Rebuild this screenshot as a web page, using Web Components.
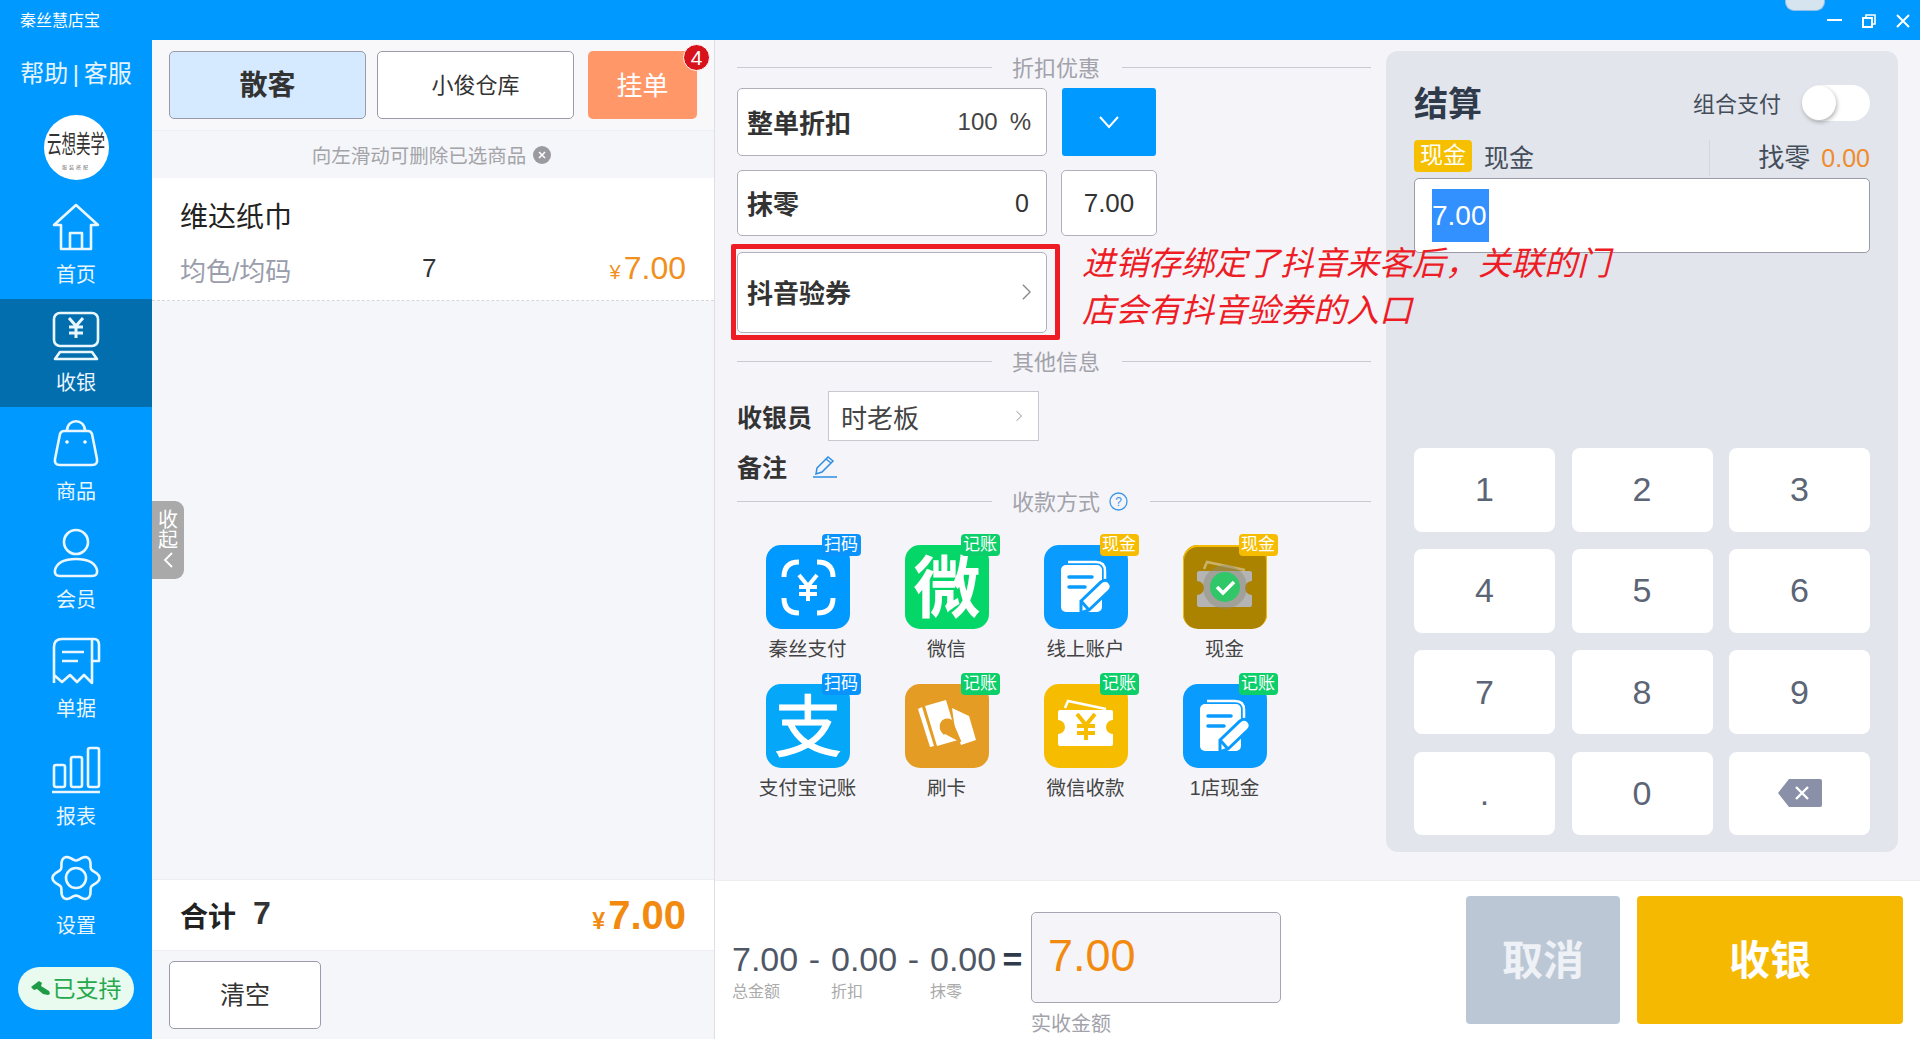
<!doctype html>
<html lang="zh"><head><meta charset="utf-8"><title>秦丝慧店宝</title>
<style>
html,body{margin:0;height:1039px;overflow:hidden;background:#f4f4f9}
body{font-family:"Liberation Sans","Noto Sans CJK SC",sans-serif;color:#333}
</style></head><body>
<app-shell></app-shell>
<script>
const gear=(()=>{let d='';for(let i=0;i<=96;i++){const t=i/96*Math.PI*2,r=20.5+3*Math.cos(6*t);d+=(i?'L':'M')+(24+r*Math.cos(t)).toFixed(2)+' '+(24+r*Math.sin(t)).toFixed(2)}return d+'Z'})();
const nav={
home:'<path d="M24 2 46 22H39V46H9V22H2Z"/><path d="M18 46V30H30V46"/>',
cash:'<rect x="2" y="1" width="44" height="33" rx="6"/><path d="M17 6l7 8 7-8M24 14v12M17 15h14M17 21h14" stroke-width="3"/><path d="M8 40H40L45 47H3Z"/>',
bag:'<path d="M12 11H36Q39 11 40 14L45 39Q46 45 40 45H8Q2 45 3 39L8 14Q9 11 12 11Z"/><path d="M15 11C15-2 33-2 33 11"/><circle cx="15" cy="22" r="1.8" fill="#fff" stroke="none"/><circle cx="33" cy="22" r="1.8" fill="#fff" stroke="none"/>',
user:'<circle cx="24" cy="13" r="12"/><path d="M8 47H40Q46 47 45 41C43 33 34 30 24 30S5 33 3 41Q2 47 8 47Z"/>',
bill:'<path d="M2 46V10Q2 2 10 2H42Q47 2 47 8V24H40M40 2V46L32 38 25 45 18 38 10 45 2 38V46"/><path d="M10 15H32M10 24H26"/>',
chart:'<rect x="2" y="19" width="11" height="22" rx="2"/><rect x="19" y="11" width="11" height="30" rx="2"/><rect x="36" y="2" width="11" height="39" rx="2"/><path d="M0 46H48"/>',
gear:`<path d="${gear}"/><circle cx="24" cy="24" r="10"/>`
};
const yen=c=>`<path d="M33 30 42 41 51 30M42 41V56M33 42H51M33 49H51" fill="none" stroke="${c}" stroke-width="4"/>`;
const ticket=(c,back)=>`<path d="M21 24 24 17 62 25" fill="none" stroke="${back}" stroke-width="2.5"/><path d="M16 26H67Q69 26 69 28V36A7 7 0 0 0 69 50V60Q69 62 67 62H16Q14 62 14 60V50A7 7 0 0 0 14 36V28Q14 26 16 26Z" fill="${c}"/>`;
const note=b=>`<path d="M24 17H52Q61 17 61 26V46" fill="none" stroke="#fff" stroke-width="2.5"/><rect x="17" y="20" width="41" height="47" rx="5" fill="#fff"/><path d="M25 32H48M25 42H41" stroke="${b}" stroke-width="3.5" stroke-linecap="round" fill="none"/><path d="M37 56 57 37Q62 33 66 38 69 42 65 46L45 65 37 68Z" fill="#fff" stroke="${b}" stroke-width="3"/><path d="M37 56 45 65" stroke="${b}" stroke-width="3"/>`;
const glyph=(t,w,s)=>`<text x="42" y="67" text-anchor="middle" font-size="67" font-weight="${w}" fill="#fff" stroke="#fff" stroke-width="${s}" font-family="Noto Sans CJK SC">${t}</text>`;
const payIcons={
scan:'<path d="M33 17Q18 17 18 32M51 17Q67 17 67 32M33 68Q18 68 18 53M51 68Q67 68 67 53" fill="none" stroke="#fff" stroke-width="5"/>'+yen('#fff'),
wei:glyph('微',700,0),zhi:glyph('支',400,1.2),note:note('#0a9bff'),note2:note('#0a9bff'),
cashsel:ticket('#b4b4b4','#c9b36a')+'<circle cx="42" cy="42" r="22" fill="#8a8a7a" opacity=".45"/><circle cx="42" cy="42" r="15" fill="#2fc767"/><path d="M34 42 40 48 51 37" fill="none" stroke="#fff" stroke-width="3.5"/>',
card:'<polygon points="13,25 17,23 29,62 25,63" fill="#fff"/><polygon points="20,22 41,16 53,56 32,62" fill="#fff"/><polygon points="47,24 64,32 71,56 56,61 50,45" fill="#fff"/><path d="M40 50C32 42 38 33 46 37L55 58" fill="#e49c25" stroke="#e49c25" stroke-width="3"/>',
ticket:ticket('#fff','#fff')+yen('#f5bc00')
};
const def=(name,css,html)=>customElements.define(name,class extends HTMLElement{connectedCallback(){if(this.shadowRoot)return;this.attachShadow({mode:'open'}).innerHTML=`<style>${css}</style>${html(this)}`}});
const chev=(s,c='#888')=>`<svg width="${s}" height="${s*2}" viewBox="0 0 10 20" fill="none" stroke="${c}" stroke-width="1.5"><path d="M1 2 9 10 1 18"/></svg>`;

def('app-shell',`:host{display:flex;flex-direction:column;width:1920px;height:1039px}
.b{flex:1;display:flex;min-height:0}.m{flex:1;display:flex;flex-direction:column;min-width:0}.t{flex:1;display:flex;min-height:0}`,
()=>`<title-bar></title-bar><div class="b"><side-nav></side-nav><cart-panel></cart-panel><div class="m"><div class="t"><option-panel></option-panel><settle-card></settle-card></div><amount-bar></amount-bar></div></div>`);

def('title-bar',`:host{display:flex;height:40px;background:#0099ff;color:#fff;font-size:16px;position:relative}
.n{padding:13px 0 0 20px;line-height:16px;flex:1}.nub{width:38px;height:10px;background:#d6e4ef;border:1px solid #8cc0ea;border-top:0;border-radius:0 0 9px 9px;margin-right:2px}
.c{display:flex;gap:20px;padding:14px 10px 0 0}svg{display:block}`,
()=>`<div class="n">秦丝慧店宝</div><div class="nub"></div><div class="c">
<svg width="15" height="14" viewBox="0 0 15 14" stroke="#fff" fill="none" stroke-width="2"><path d="M0 6H15"/></svg>
<svg width="14" height="14" viewBox="0 0 14 14" stroke="#fff" fill="none" stroke-width="1.6"><rect x="1" y="4" width="9" height="9" stroke-width="2"/><path d="M4 4V1H13V10H10"/></svg>
<svg width="14" height="14" viewBox="0 0 14 14" stroke="#fff" fill="none" stroke-width="2"><path d="M1 1 13 13M13 1 1 13"/></svg></div>`);

def('side-nav',`:host{display:flex;flex-direction:column;align-items:stretch;width:152px;background:#0099ff;color:#fff;flex:none}
.h{height:67px;font-size:24px;line-height:67px;text-align:center;color:#e4f4ff;white-space:nowrap;word-spacing:-2px}
.a{width:65px;height:65px;border-radius:50%;background:#fff;align-self:center;margin:8px 0 10px;color:#333;display:flex;flex-direction:column;align-items:center;overflow:hidden}
.a b{font-weight:400;font-size:14.5px;line-height:15px;margin-top:23px;transform:scaleY(1.7);white-space:nowrap}
.a i{font-style:normal;font-size:5px;line-height:6px;margin-top:11px;color:#777;letter-spacing:2px}
.p{margin:17px auto 0;width:116px;height:43px;border-radius:22px;background:#e8fbee;color:#27a84d;font-size:23px;display:flex;align-items:center;justify-content:center;gap:2px;white-space:nowrap}
.p span{margin-top:-3px}`,
()=>`<div class="h">帮助 | 客服</div><div class="a"><b>云想美学</b><i>服装搭配</i></div>
<nav-item icon="home" label="首页"></nav-item><nav-item icon="cash" label="收银" active></nav-item><nav-item icon="bag" label="商品"></nav-item><nav-item icon="user" label="会员"></nav-item><nav-item icon="bill" label="单据"></nav-item><nav-item icon="chart" label="报表"></nav-item><nav-item icon="gear" label="设置"></nav-item>
<div class="p"><svg width="20" height="16" viewBox="0 0 20 16" fill="#1f9a45"><path d="M0 7 8 1 11 3 10 6 18 11Q20 14 17 15L12 14 6 9 3 10Z"/></svg><span>已支持</span></div>`);

def('nav-item',`:host{display:flex;flex-direction:column;align-items:center;height:108.5px;color:#fff;font-size:20px;box-sizing:border-box;padding-top:13px}
:host([active]){background:#026eae}svg{display:block;overflow:visible}span{line-height:24px;margin-top:11.5px;color:#eaf6ff}`,
e=>`<svg width="48" height="48" viewBox="0 0 48 48" fill="none" stroke="#eaf7ff" stroke-width="2.6" stroke-linejoin="round">${nav[e.getAttribute('icon')]}</svg><span>${e.getAttribute('label')}</span>`);

def('cart-panel',`:host{display:flex;flex-direction:column;width:563px;flex:none;background:#f5f6fa;border-right:1px solid #dedee4;box-sizing:border-box;position:relative}
.top{display:flex;padding:11px 0 11px 17px;border-bottom:1px solid #eceef2;background:#f8f8fa;height:68px;flex:none}
.btn{width:197px;height:68px;box-sizing:border-box;border:1px solid #9a9aaa;border-radius:5px;background:#fff;display:flex;align-items:center;justify-content:center;font-size:22px;margin-right:11px;padding-bottom:4px}
.btn.s{background:#d6eaff;font-size:28px;font-weight:700;color:#333}
.hang{width:109px;height:68px;box-sizing:border-box;padding-bottom:4px;background:#ff9769;border-radius:5px;color:#fff;font-size:26px;display:flex;align-items:center;justify-content:center;margin-left:3px;position:relative}
.bd{position:absolute;right:-13px;top:-7px;width:27px;height:27px;box-sizing:border-box;border:1px solid #fff;border-radius:50%;background:#d8121a;color:#fff;font-size:21px;display:flex;align-items:center;justify-content:center}
.hint{height:47px;display:flex;align-items:center;justify-content:center;color:#a4a4a8;font-size:19.5px;gap:7px;padding-right:3px;flex:none}
.x{width:18px;height:18px;border-radius:50%;background:#9a9aa0;display:block}
.it{background:#fff;height:122px;border-bottom:1px dashed #d5d6de;flex:none;position:relative;padding:0 28px;display:flex;flex-direction:column}
.nm{font-size:28px;line-height:40px;margin-top:20px;color:#222}
.r{display:flex;align-items:center;margin-top:13px;height:36px}.sub{font-size:26px;color:#9a9dab;width:242px}.q{font-size:26px;color:#333;flex:1;margin-top:-2px}
.pr{color:#f09020;font-size:32px;display:flex;align-items:baseline;margin-top:-2px}.pr small{font-size:20px;margin-right:3px}
.tab{position:absolute;left:0;top:461px;width:32px;height:78px;background:#a9a9a9;border-radius:0 9px 9px 0;color:#fff;font-size:20px;line-height:20px;text-align:center;padding-top:9px;box-sizing:border-box}
.tab svg{display:block;margin:2px auto 0}
.sp{flex:1}.tot{height:70px;background:#fff;border-top:1px solid #eceef2;border-bottom:1px solid #eceef2;display:flex;align-items:center;padding:0 28px;flex:none;font-weight:700}
.tl{font-size:28px;color:#222}.tn{font-size:32px;margin-left:17px;flex:1;color:#333;margin-top:-4px}.tp{color:#f28a10;font-size:40px;display:flex;align-items:baseline}.tp small{font-size:23px;margin-right:3px}
.bot{height:88px;padding:10px 0 0 17px;box-sizing:border-box;flex:none}.clr{width:152px;height:68px;box-sizing:border-box;border:1px solid #9a9aaa;border-radius:5px;background:#fff;font-size:25px;display:flex;align-items:center;justify-content:center;padding-bottom:4px}`,
()=>`<div class="top"><div class="btn s">散客</div><div class="btn">小俊仓库</div><div class="hang">挂单<span class="bd">4</span></div></div>
<div class="hint">向左滑动可删除已选商品<svg class="x" viewBox="0 0 18 18" stroke="#fff" stroke-width="1.6"><path d="M6 6 12 12M12 6 6 12"/></svg></div>
<div class="it"><div class="nm">维达纸巾</div><div class="r"><span class="sub">均色/均码</span><span class="q">7</span><span class="pr"><small>¥</small>7.00</span></div></div>
<div class="tab">收<br>起<svg width="10" height="16" viewBox="0 0 10 16" fill="none" stroke="#fff" stroke-width="1.8"><path d="M9 1 2 8 9 15"/></svg></div>
<div class="sp"></div><div class="tot"><span class="tl">合计</span><span class="tn">7</span><span class="tp"><small>¥</small>7.00</span></div>
<div class="bot"><div class="clr">清空</div></div>`);

def('sec-title',`:host{display:flex;align-items:center;height:30px;color:#a2a2aa;font-size:22px;white-space:nowrap;width:634px}
i{height:1px;background:#c9c9d2;display:block}.l{width:255px}.r{flex:1}span{margin:-3px 0 0 20px}slot{display:block}.gap{margin-left:22px}`,
()=>`<i class="l"></i><span><slot></slot></span><slot name="after"></slot><i class="r gap"></i>`);

def('field-box',`:host{display:flex;flex:none;align-items:center;box-sizing:border-box;width:310px;background:#fff;border:1px solid #b0b0bc;border-radius:5px;padding:0 15px 0 9px;font-size:26px;color:#333}
.l{font-weight:700;flex:1;color:#333;margin-top:-2px}`,
e=>`<span class="l">${e.getAttribute('label')}</span><slot></slot>`);

def('pay-tile',`:host{display:flex;flex-direction:column;align-items:center;height:139px;width:139px}
.w{width:84px;height:84px;border-radius:15px;position:relative}svg{display:block;overflow:visible}
.b{position:absolute;right:-11px;top:-11px;width:39px;height:22px;border-radius:4px;color:#fff;font-size:17px;line-height:22px;text-align:center;white-space:nowrap}
span{font-size:19.5px;line-height:24px;margin-top:8px;color:#444;white-space:nowrap}`,
e=>{const a=n=>e.getAttribute(n);return `<div class="w" style="background:${a('bg')};${a('edge')?'box-shadow:0 1px 0 1px #f5bc00 inset':''}"><svg width="84" height="84" viewBox="0 0 84 84">${payIcons[a('icon')]}</svg><div class="b" style="background:${a('bc')}">${a('badge')}</div></div><span>${a('label')}</span>`});

def('option-panel',`:host{display:block;width:671px;flex:none;box-sizing:border-box;padding:12px 0 0 22px;position:relative;z-index:2}
.row{display:flex;align-items:stretch}
.g{width:94px;margin-left:15px;background:#0099ff;border-radius:3px;display:flex;align-items:center;justify-content:center}
.v{width:96px;margin-left:14px;box-sizing:border-box;background:#fff;border:1px solid #b0b0bc;border-radius:5px;display:flex;align-items:center;justify-content:center;font-size:26px;color:#333}
.pc{color:#999;margin-left:12px}.num{font-size:24px;color:#444}
.red{position:absolute;left:-6px;top:-8px;width:329px;height:96px;box-sizing:border-box;border:5px solid #ee1c25;border-radius:2px}
.ann{margin-left:35px;color:#ee1c25;font-size:33px;line-height:47px;font-style:italic;white-space:nowrap;margin-top:-12px;height:90px;position:relative}
.cash{display:flex;align-items:center;margin-top:15px;font-size:25px;font-weight:700}
.sel{width:211px;height:50px;box-sizing:border-box;background:#fff;border:1px solid #c8c8d0;margin-left:16px;padding:0 16px 0 12px;display:flex;align-items:center;justify-content:space-between;font-weight:400;color:#444;font-size:26px}
.rem{display:flex;align-items:center;font-size:25px;font-weight:700;height:36px;margin-top:7px}.rem svg{margin-left:26px}
.q{width:19px;height:19px;margin-left:9px;display:block}
.grid{display:grid;grid-template-columns:repeat(4,139px);margin:29px 0 0 1px}`,
()=>`<sec-title>折扣优惠</sec-title>
<div class="row" style="margin-top:6px;height:68px"><field-box label="整单折扣"><span class="num">100</span><span class="num pc">%</span></field-box><div class="g"><svg width="22" height="14" viewBox="0 0 22 14" fill="none" stroke="#fff" stroke-width="2"><path d="M2 2 11 12 20 2"/></svg></div></div>
<div class="row" style="margin-top:14px;height:66px"><field-box label="抹零"><span style="font-size:25px;margin-right:2px">0</span></field-box><div class="v">7.00</div></div>
<div class="row" style="margin-top:16px;height:81px;position:relative"><field-box label="抖音验券"><span style="margin-right:0;display:block">${chev(9,'#888')}</span></field-box><div class="red"></div><div class="ann">进销存绑定了抖音来客后，关联的门<br>店会有抖音验券的入口</div></div>
<sec-title style="margin-top:13px">其他信息</sec-title>
<div class="cash">收银员<div class="sel">时老板${chev(6,'#888')}</div></div>
<div class="rem">备注<svg width="24" height="24" viewBox="0 0 24 24" fill="none" stroke="#2b8fe6" stroke-width="1.5"><path d="M4 14 15 3 20 7 9 18 3 20ZM13 5l5 4M0 23H24"/></svg></div>
<sec-title style="margin-top:2px">收款方式<svg slot="after" class="q" viewBox="0 0 19 19" fill="none" stroke="#3a95e8" stroke-width="1.3"><circle cx="9.5" cy="9.5" r="8.5"/><text x="9.5" y="14" text-anchor="middle" font-size="12" fill="#3a95e8" stroke="none" font-family="Liberation Sans">?</text></svg></sec-title>
<div class="grid">
<pay-tile label="秦丝支付" icon="scan" bg="#0099ff" badge="扫码" bc="#0a94fb"></pay-tile>
<pay-tile label="微信" icon="wei" bg="#04d768" badge="记账" bc="#0ccf6a"></pay-tile>
<pay-tile label="线上账户" icon="note" bg="#0a9bff" badge="现金" bc="#f5bc00"></pay-tile>
<pay-tile label="现金" icon="cashsel" bg="#ac8300" badge="现金" bc="#f5bc00" edge="1"></pay-tile>
<pay-tile label="支付宝记账" icon="zhi" bg="#05a8f8" badge="扫码" bc="#0a94fb"></pay-tile>
<pay-tile label="刷卡" icon="card" bg="#e49c25" badge="记账" bc="#0ccf6a"></pay-tile>
<pay-tile label="微信收款" icon="ticket" bg="#f5bc00" badge="记账" bc="#0ccf6a"></pay-tile>
<pay-tile label="1店现金" icon="note2" bg="#0a9bff" badge="记账" bc="#0ccf6a"></pay-tile>
</div>`);

def('key-pad',`:host{display:grid;grid-template-columns:repeat(3,141px);grid-auto-rows:83.5px;gap:17.7px 16.5px}
div{background:#fff;border-radius:8px;display:flex;align-items:center;justify-content:center;font-size:34px;color:#5b6575}`,
()=>['1','2','3','4','5','6','7','8','9','.','0'].map(k=>`<div>${k}</div>`).join('')+`<div><svg width="44" height="28" viewBox="0 0 44 28"><path d="M11 0H42Q44 0 44 2V26Q44 28 42 28H11L0 14Z" fill="#8a90a8"/><path d="M18 8 30 20M30 8 18 20" stroke="#fff" stroke-width="2.4"/></svg></div>`);

def('settle-card',`:host{display:block;width:512px;height:801px;margin:11px 22px 0 0;background:#e2e5ec;border-radius:12px;box-sizing:border-box;padding:33px 28px 0;flex:none}
.h{display:flex;align-items:center;height:36px}.h b{font-size:34px;color:#2f3a4a;flex:1;margin-top:-1px}.h span{font-size:22px;color:#444d5a;margin-right:21px}
.tg{width:68px;height:36px;border-radius:18px;background:#fff;position:relative;margin-top:2px}.tg i{position:absolute;left:0;top:1px;width:34px;height:34px;border-radius:50%;background:#fff;box-shadow:1px 2px 4px rgba(0,0,0,.3)}
.p{display:flex;height:36px;margin-top:20px;align-items:center;font-size:25px;color:#444d5a}
.l{width:295px;display:flex;align-items:center;align-self:flex-start;height:32px}.tag{width:58px;height:32px;background:#f6c000;border-radius:4px;color:#fff;font-size:23px;text-align:center;line-height:30px;margin-right:12px}
.d{width:1px;height:36px;background:#d3d6de}.rr{flex:1;text-align:right;white-space:nowrap;margin-top:-5px;font-size:26px}.rr em{font-style:normal;color:#ef8c2e;font-size:25px;margin-left:11px}
.in{height:75px;margin-top:2px;box-sizing:border-box;background:#fff;border:1px solid #9a9aa8;border-radius:5px;padding:10px 0 0 17px}
.in span{display:inline-block;height:53px;line-height:53px;background:#3390ff;color:#fff;font-size:28px;padding-right:2px;vertical-align:top}
key-pad{margin-top:195px}`,
()=>`<div class="h"><b>结算</b><span>组合支付</span><div class="tg"><i></i></div></div>
<div class="p"><div class="l"><div class="tag">现金</div>现金</div><div class="d"></div><div class="rr">找零<em>0.00</em></div></div>
<div class="in"><span>7.00</span></div><key-pad></key-pad>`);

def('amount-bar',`:host{display:flex;height:159px;background:#fff;border-top:1px solid #eceef2;box-sizing:border-box;padding-left:17px;align-items:flex-start;flex:none}
.e{display:flex;margin-top:58px;color:#4f5766;font-size:34px;line-height:40px}
.c{width:66px;white-space:nowrap}.c small{display:block;font-size:16px;line-height:20px;color:#aaa;margin-top:3px}
.o{width:33px;text-align:center;color:#4f5766}.eq{color:#2f3a4a;font-weight:700}
.bx{margin:31px 0 0 2px;width:250px}.bv{height:91px;box-sizing:border-box;background:#f4f4f9;border:1px solid #a6a6b2;border-radius:5px;color:#f28a10;font-size:45px;line-height:86px;padding-left:16px}
.bl{font-size:20px;line-height:28px;margin-top:7px;color:#a2a2aa}
.bt{display:flex;gap:17px;margin:15px 17px 0 auto}.bt div{height:128px;box-sizing:border-box;padding-bottom:6px;display:flex;align-items:center;justify-content:center;font-size:41px;font-weight:700;color:#fff;border-radius:4px}
.ca{width:154px;background:#bcc7d6;color:#eef1f5!important}.ok{width:266px;background:#f6b902}`,
()=>`<div class="e"><div class="c">7.00<small>总金额</small></div><div class="o">-</div><div class="c">0.00<small>折扣</small></div><div class="o">-</div><div class="c">0.00<small>抹零</small></div><div class="o eq">=</div></div>
<div class="bx"><div class="bv">7.00</div><div class="bl">实收金额</div></div>
<div class="bt"><div class="ca">取消</div><div class="ok">收银</div></div>`);
</script>
</body></html>
